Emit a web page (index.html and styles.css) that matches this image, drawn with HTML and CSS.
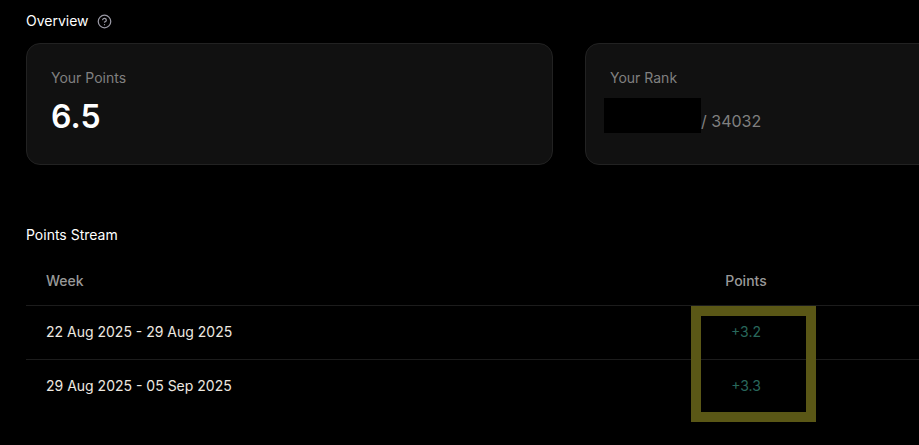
FILE: index.html
```html
<!DOCTYPE html>
<html lang="en">
<head>
  <meta charset="UTF-8" />
  <meta name="viewport" content="width=device-width, initial-scale=1.0"/>
  <title>Points Overview</title>
  <link rel="stylesheet" href="styles.css">
</head>
<body>
  <main class="points-page">
    <!-- Overview -->
    <section class="overview">
      <div class="section-header">
        <h2>Overview</h2>
        <svg class="help-icon" viewBox="0 0 24 24" fill="none" stroke="currentColor" stroke-width="2" stroke-linecap="round" stroke-linejoin="round">
          <circle cx="12" cy="12" r="10"/>
          <path d="M9.09 9a3 3 0 0 1 5.83 1c0 2-3 3-3 3"/>
          <path d="M12 17h.01"/>
        </svg>
      </div>
      <div class="overview-cards">
        <div class="card">
          <h3>Your Points</h3>
          <p class="card-value">6.5</p>
        </div>
        <div class="card">
          <h3>Your Rank</h3>
          <div class="rank-row">
            <span class="rank-hidden"></span>
            <span class="rank-total">/ 34032</span>
          </div>
        </div>
      </div>
    </section>

    <!-- Points Stream -->
    <section class="stream">
      <h2>Points Stream</h2>
      <table class="stream-table">
        <thead>
          <tr>
            <th class="week">Week</th>
            <th class="points">Points</th>
            <th></th>
          </tr>
        </thead>
        <tbody>
          <tr>
            <td class="week">22 Aug 2025 - 29 Aug 2025</td>
            <td class="points">+3.2</td>
            <td></td>
          </tr>
          <tr>
            <td class="week">29 Aug 2025 - 05 Sep 2025</td>
            <td class="points">+3.3</td>
            <td></td>
          </tr>
        </tbody>
      </table>
      <div class="highlight-box"></div>
    </section>
  </main>
</body>
</html>
```

FILE: styles.css
```css
* {
  box-sizing: border-box;
  margin: 0;
  padding: 0;
}

body {
  min-height: 100vh;
  font-family: Inter, sans-serif;
  font-size: 14px;
  line-height: 20px;
  background-color: #000;
  color: #fff;
  overflow: hidden;
}

h2 {
  font-size: 14px;
  font-weight: 400;
  line-height: 20px;
}

.points-page {
  width: 1112px;
  padding: 11px 0 0 26px;
}

/* Overview */
.section-header {
  display: flex;
  align-items: center;
  gap: 8px;
  margin-bottom: 12px;
}

.help-icon {
  width: 15px;
  height: 15px;
  color: #9a99a5;
}

.overview-cards {
  display: grid;
  grid-template-columns: 1fr 1fr;
  gap: 32px;
}

.card {
  height: 122px;
  padding: 24px;
  background: #111;
  border: 1px solid #222;
  border-radius: 14px;
}

.card h3 {
  font-size: 14px;
  font-weight: 400;
  line-height: 20px;
  color: #808080;
}

.card-value {
  margin-top: 9px;
  font-size: 32px;
  font-weight: 600;
  line-height: 40px;
}

.rank-row {
  display: flex;
  margin: 10px 0 0 -6px;
}

.rank-hidden {
  width: 97px;
  height: 35px;
  background: #000;
}

.rank-total {
  padding-top: 11px;
  font-size: 16px;
  line-height: 24px;
  color: #808080;
}

/* Points Stream */
.stream {
  position: relative;
  margin-top: 60px;
}

.stream-table {
  width: 100%;
  margin-top: 11px;
  table-layout: fixed;
  border-collapse: separate;
  border-spacing: 0;
}

.stream-table th {
  height: 50px;
  font-weight: 500;
  color: #999;
  border-bottom: 1px solid #1c1c1c;
}

.stream-table td {
  height: 54px;
  padding-bottom: 2px;
  color: #eee9e0;
  border-bottom: 1px solid #1c1c1c;
}

.stream-table tbody tr:last-child td {
  border-bottom: none;
}

.stream-table .week {
  width: 620px;
  padding-left: 20px;
  text-align: left;
}

.stream-table .points {
  width: 200px;
  text-align: center;
}

.stream-table td.points {
  color: #29685c;
}

/* Frame over the points column */
.highlight-box {
  position: absolute;
  top: 81px;
  left: 665px;
  width: 125px;
  height: 116px;
  border: 10px solid #5a5716;
}
```
